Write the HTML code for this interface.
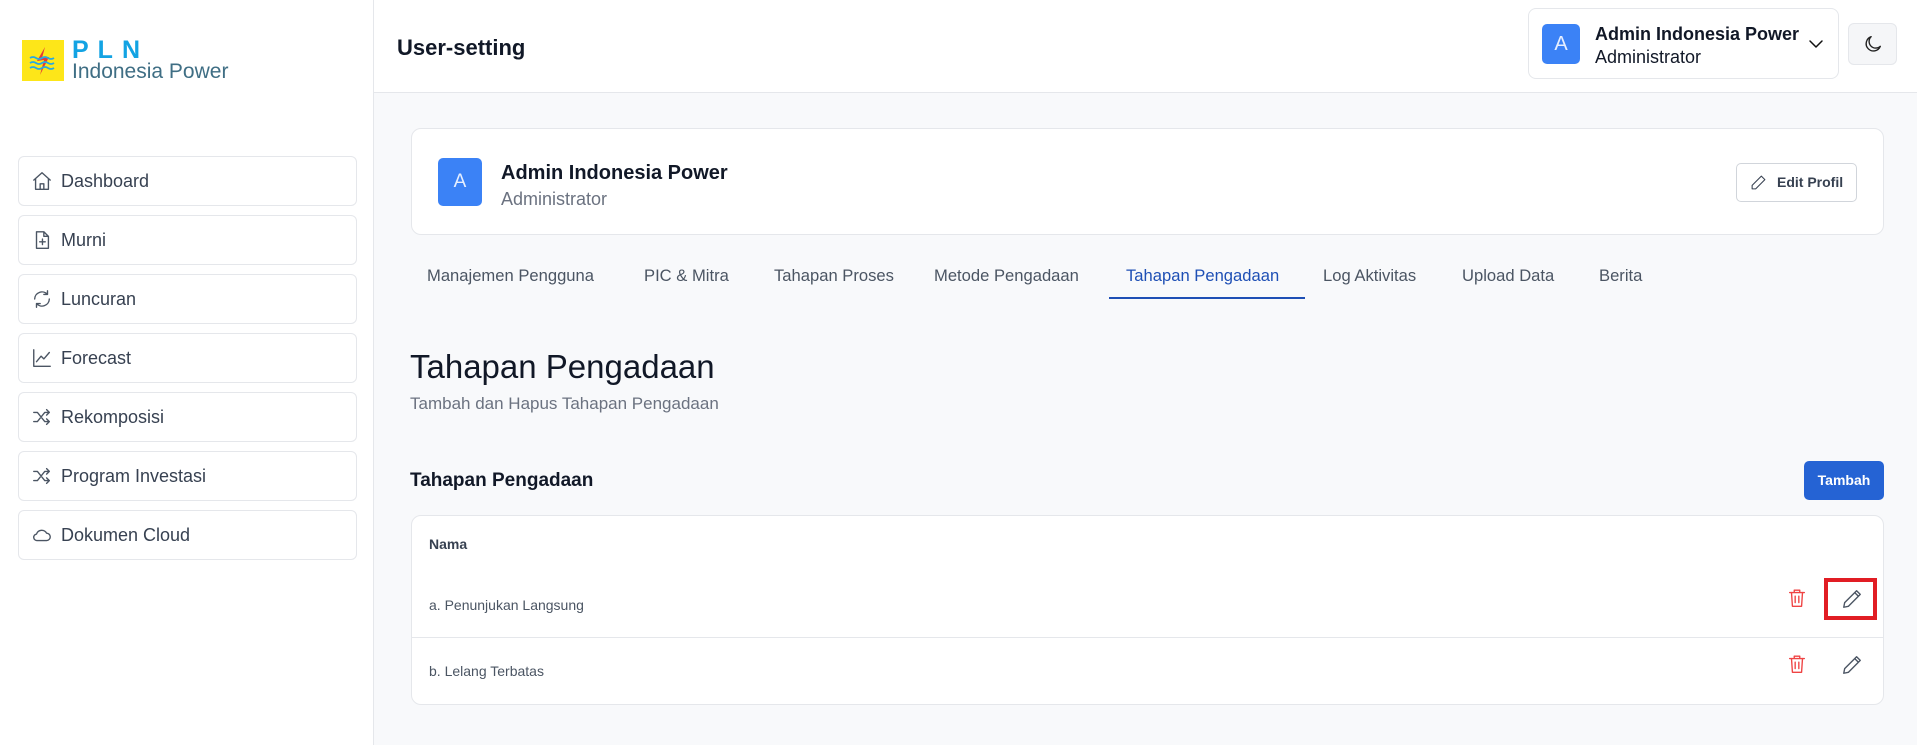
<!DOCTYPE html>
<html><head><meta charset="utf-8"><style>
*{box-sizing:border-box;margin:0;padding:0}
body{width:1917px;height:745px;overflow:hidden;font-family:"Liberation Sans",sans-serif;background:#f8f9fb;position:relative;color:#111827}
.abs{position:absolute}
#side{left:0;top:0;width:374px;height:745px;background:#fff;border-right:1px solid #e5e7eb}
#hdr{left:374px;top:0;width:1543px;height:93px;background:#fff;border-bottom:1px solid #e5e7eb}
.nav{position:absolute;left:18px;width:339px;height:50px;border:1px solid #e5e7eb;border-radius:6px;background:#fff;font-size:18px;color:#374151;display:flex;align-items:center;padding-left:12px}
.nav svg{width:22px;height:22px;margin-right:8px;stroke:#4b5563;fill:none;stroke-width:1.5;stroke-linecap:round;stroke-linejoin:round}
.card{background:#fff;border:1px solid #e5e7eb;border-radius:10px}
.tab{position:absolute;top:266px;font-size:16.6px;color:#4b5563;white-space:nowrap}
.ico{fill:none;stroke-width:1.5;stroke-linecap:round;stroke-linejoin:round}
</style></head><body>
<div id="side" class="abs">
 <div class="abs" style="left:22px;top:40px;width:42px;height:41px;background:#fde619"></div>
 <svg class="abs" style="left:26px;top:44px" width="34" height="34" viewBox="0 0 34 34"><path d="M19 3 L11 17 L18 16 L14 31 L23 13 L16 14 Z" fill="#e53935"/><path d="M4 14 q3-2 6 0 t6 0 t6 0 t6 0 M4 19 q3-2 6 0 t6 0 t6 0 t6 0 M4 24 q3-2 6 0 t6 0 t6 0 t6 0" stroke="#29a9e0" stroke-width="1.8" fill="none"/></svg>
 <div class="abs" style="left:72px;top:36px;font-size:25px;font-weight:bold;color:#13a3e3;letter-spacing:9px">PLN</div>
 <div class="abs" style="left:72px;top:60px;font-size:21px;color:#3f6e84">Indonesia Power</div>
 <div class="nav" style="top:156px"><svg viewBox="0 0 24 24"><path d="M3 11 L12 3 L21 11 M5 9.5 V21 H19 V9.5 M10 21 V15 H14 V21"/></svg>Dashboard</div>
 <div class="nav" style="top:215px"><svg viewBox="0 0 24 24"><path d="M6 3 H14 L19 8 V21 H6 Z M14 3 V8 H19 M12.5 11 V17 M9.5 14 H15.5"/></svg>Murni</div>
 <div class="nav" style="top:274px"><svg viewBox="0 0 24 24"><path d="M4 12 A8 8 0 0 1 18 7 M18 3 V7 H14 M20 12 A8 8 0 0 1 6 17 M6 21 V17 H10"/></svg>Luncuran</div>
 <div class="nav" style="top:333px"><svg viewBox="0 0 24 24"><path d="M3 3 V21 H21 M6 16 L11 10 L14 13 L20 6"/></svg>Forecast</div>
 <div class="nav" style="top:392px"><svg viewBox="0 0 24 24"><path d="M3 7 H7 L15 17 H20 M3 17 H7 L15 7 H20 M17 4 L20 7 L17 10 M17 14 L20 17 L17 20"/></svg>Rekomposisi</div>
 <div class="nav" style="top:451px"><svg viewBox="0 0 24 24"><path d="M3 7 H7 L15 17 H20 M3 17 H7 L15 7 H20 M17 4 L20 7 L17 10 M17 14 L20 17 L17 20"/></svg>Program Investasi</div>
 <div class="nav" style="top:510px"><svg viewBox="0 0 24 24"><path d="M7 18 H17 A4 4 0 0 0 17 10 A6 6 0 0 0 6 11 A3.5 3.5 0 0 0 7 18 Z"/></svg>Dokumen Cloud</div>
</div>
<div id="hdr" class="abs">
 <div class="abs" style="left:23px;top:35px;font-size:22px;font-weight:bold">User-setting</div>
 <div class="abs card" style="left:1154px;top:8px;width:311px;height:71px;border-radius:8px"></div>
 <div class="abs" style="left:1168px;top:24px;width:38px;height:40px;background:#3b82f6;border-radius:5px;color:#e6efff;font-size:20px;text-align:center;line-height:40px">A</div>
 <div class="abs" style="left:1221px;top:24px;font-size:18px;font-weight:bold">Admin Indonesia Power</div>
 <div class="abs" style="left:1221px;top:47px;font-size:18px">Administrator</div>
 <svg class="abs ico" style="left:1432px;top:34px" width="20" height="20" viewBox="0 0 20 20" stroke="#111"><path d="M4 7 L10 13 L16 7"/></svg>
 <div class="abs" style="left:1474px;top:23px;width:49px;height:42px;background:#f5f6f8;border:1px solid #e5e7eb;border-radius:6px"></div>
 <svg class="abs ico" style="left:1488px;top:33px" width="22" height="22" viewBox="0 0 24 24" stroke="#222"><path d="M20 14.5 A8 8 0 1 1 10 4 A6.5 6.5 0 0 0 20 14.5 Z"/></svg>
</div>
<div class="abs card" style="left:411px;top:128px;width:1473px;height:107px"></div>
<div class="abs" style="left:438px;top:158px;width:44px;height:48px;background:#3b82f6;border-radius:5px;color:#e6efff;font-size:19px;text-align:center;line-height:48px">A</div>
<div class="abs" style="left:501px;top:162px;font-size:20px;font-weight:bold">Admin Indonesia Power</div>
<div class="abs" style="left:501px;top:189px;font-size:18px;color:#6b7280">Administrator</div>
<div class="abs" style="left:1736px;top:163px;width:121px;height:39px;background:#fff;border:1px solid #d1d5db;border-radius:5px;font-size:14px;font-weight:bold;color:#374151;line-height:37px;padding-left:40px">Edit Profil</div>
<svg class="abs ico" style="left:1750px;top:174px" width="17" height="17" viewBox="0 0 24 24" stroke="#374151"><path d="M16 3 L21 8 L8 21 H3 V16 Z"/></svg>
<div class="tab" style="left:427px">Manajemen Pengguna</div>
<div class="tab" style="left:644px">PIC &amp; Mitra</div>
<div class="tab" style="left:774px">Tahapan Proses</div>
<div class="tab" style="left:934px">Metode Pengadaan</div>
<div class="tab" style="left:1126px;color:#1e4fb5">Tahapan Pengadaan</div>
<div class="tab" style="left:1323px">Log Aktivitas</div>
<div class="tab" style="left:1462px">Upload Data</div>
<div class="tab" style="left:1599px">Berita</div>
<div class="abs" style="left:1109px;top:297px;width:196px;height:2px;background:#1e4fb5"></div>
<div class="abs" style="left:410px;top:348px;font-size:33px">Tahapan Pengadaan</div>
<div class="abs" style="left:410px;top:394px;font-size:17px;color:#6b7280">Tambah dan Hapus Tahapan Pengadaan</div>
<div class="abs" style="left:410px;top:470px;font-size:19px;font-weight:bold">Tahapan Pengadaan</div>
<div class="abs" style="left:1804px;top:461px;width:80px;height:39px;background:#2563d4;border-radius:5px;color:#fff;font-size:14px;font-weight:bold;text-align:center;line-height:39px">Tambah</div>
<div class="abs card" style="left:411px;top:515px;width:1473px;height:190px"></div>
<div class="abs" style="left:429px;top:536px;font-size:14px;font-weight:bold;color:#374151">Nama</div>
<div class="abs" style="left:429px;top:597px;font-size:14px;color:#4b5563">a. Penunjukan Langsung</div>
<div class="abs" style="left:412px;top:637px;width:1471px;height:1px;background:#e5e7eb"></div>
<div class="abs" style="left:429px;top:663px;font-size:14px;color:#4b5563">b. Lelang Terbatas</div>
<svg class="abs ico" style="left:1786px;top:587px" width="22" height="22" viewBox="0 0 24 24" stroke="#ef4444"><path d="M4 6 H20 M9 6 V3.5 H15 V6 M6 6 L7 21 H17 L18 6 M10 10 V17 M14 10 V17"/></svg>
<svg class="abs ico" style="left:1786px;top:653px" width="22" height="22" viewBox="0 0 24 24" stroke="#ef4444"><path d="M4 6 H20 M9 6 V3.5 H15 V6 M6 6 L7 21 H17 L18 6 M10 10 V17 M14 10 V17"/></svg>
<div class="abs" style="left:1824px;top:578px;width:53px;height:42px;border:4px solid #e11d24"></div>
<svg class="abs ico" style="left:1841px;top:588px" width="22" height="22" viewBox="0 0 24 24" stroke="#4b5563"><path d="M17 3 L21 7 L8 20 L3 21 L4 16 Z M15 5 L19 9"/></svg>
<svg class="abs ico" style="left:1841px;top:654px" width="22" height="22" viewBox="0 0 24 24" stroke="#4b5563"><path d="M17 3 L21 7 L8 20 L3 21 L4 16 Z M15 5 L19 9"/></svg>
</body></html>
